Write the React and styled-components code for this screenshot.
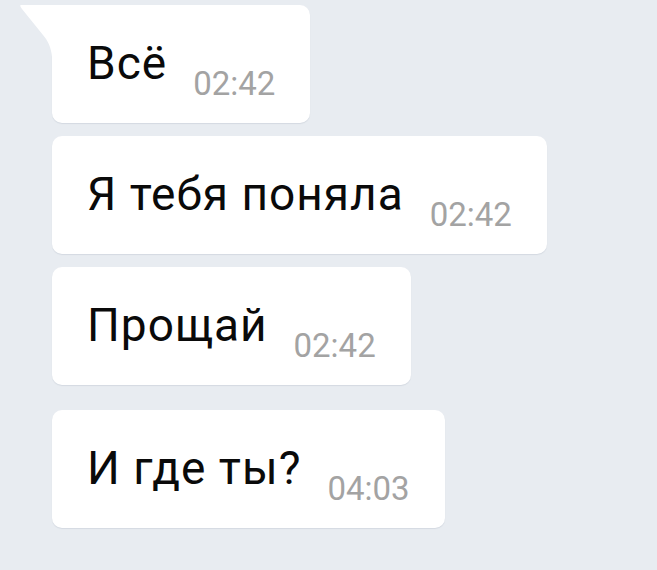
import React from 'react'
import styled, { createGlobalStyle } from 'styled-components'

const GlobalStyle = createGlobalStyle`
  html, body {
    margin: 0;
    padding: 0;
    background: #e8ecf1;
  }
  body {
    font-family: Roboto, 'Liberation Sans', sans-serif;
  }
`

const Chat = styled.div`
  display: flex;
  flex-direction: column;
  align-items: flex-start;
  gap: 13px;
  padding: 5px 0 0 52px;
  min-height: 570px;
  box-sizing: border-box;
`

const Bubble = styled.div`
  position: relative;
  display: flex;
  align-items: flex-start;
  background: #ffffff;
  border-radius: ${({ tail }) => (tail ? '0 10px 10px 10px' : '10px')};
  padding: 35px 35px 23px 35px;
  margin-top: ${({ gapAbove }) => (gapAbove ? '12px' : '0')};
  box-shadow: 0 1px 1px rgba(40, 60, 90, 0.1);
`

const Tail = styled.svg`
  position: absolute;
  left: -32px;
  top: 0;
  width: 33px;
  height: 56px;
`

const Text = styled.span`
  font-size: 46px;
  line-height: 46px;
  letter-spacing: 1px;
  color: #0a0a0a;
  white-space: nowrap;
`

const Time = styled.span`
  font-size: 33px;
  line-height: 33px;
  margin-top: 27px;
  margin-left: 26px;
  color: #a3a3a3;
`

const messages = [
  { text: 'Всё', time: '02:42', tail: true },
  { text: 'Я тебя поняла', time: '02:42' },
  { text: 'Прощай', time: '02:42' },
  { text: 'И где ты?', time: '04:03', gapAbove: true }
]

const App = () => (
  <>
    <GlobalStyle />
    <Chat>
      {messages.map((m, i) => (
        <Bubble key={i} tail={m.tail} gapAbove={m.gapAbove}>
          {m.tail && (
            <Tail viewBox="0 0 33 56">
              <path d="M1 0 L33 0 L33 56 L32 52 C31 42 28 36 23 30 L2 4 Q-1 0 1 0 Z" fill="#ffffff" />
            </Tail>
          )}
          <Text>{m.text}</Text>
          <Time>{m.time}</Time>
        </Bubble>
      ))}
    </Chat>
  </>
)

export default App
